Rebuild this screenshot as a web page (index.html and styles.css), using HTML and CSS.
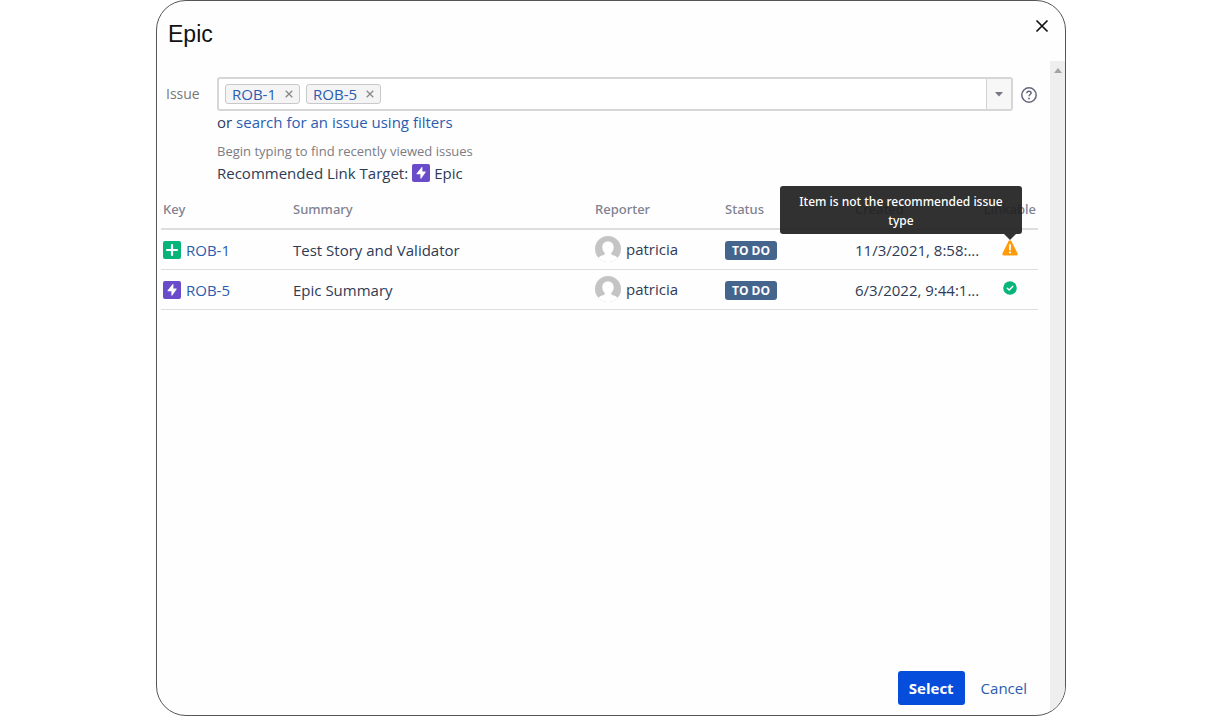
FILE: index.html
```html
<!DOCTYPE html>
<html lang="en">
<head>
    <meta charset="UTF-8">
    <meta name="viewport" content="width=device-width, initial-scale=1.0">
    <title>Epic</title>
    <link rel="stylesheet" href="styles.css">
</head>
<body>
    <!-- shared icons -->
    <svg class="sprite" width="0" height="0" aria-hidden="true">
        <symbol id="icon-epic" viewBox="0 0 18 18">
            <rect width="18" height="18" rx="2" fill="#6a4bc9"/>
            <path d="M9.6 3.2 4.6 9.4c-.3.4-.1.9.4.9h3.4v4c0 .5.5.6.8.2l4.3-6c.3-.4.1-.9-.4-.9h-2.7V3.5c0-.5-.5-.6-.8-.3z" fill="#fff"/>
        </symbol>
        <symbol id="icon-story" viewBox="0 0 18 18">
            <rect width="18" height="18" rx="2" fill="#06b479"/>
            <path d="M9 4v10M4 9h10" stroke="#fff" stroke-width="2.200" stroke-linecap="round"/>
        </symbol>
        <symbol id="icon-avatar" viewBox="0 0 26 26">
            <clipPath id="avatar-clip"><circle cx="13" cy="13" r="13"/></clipPath>
            <g clip-path="url(#avatar-clip)">
                <rect width="26" height="26" fill="#c4c4c4"/>
                <path d="M13 5.500c-3.700 0-5.700 2.500-5.700 5.800 0 2.400 1 4.400 2.500 5.700 0 1.500-.9 2-2.800 2.600C4.500 20.300 3 21.500 2 26h22c-1-4.500-2.500-5.700-5-6.400-1.900-.6-2.800-1.100-2.800-2.600 1.500-1.300 2.500-3.300 2.500-5.700 0-3.300-2-5.800-5.700-5.800z" fill="#fff"/>
            </g>
        </symbol>
    </svg>

    <div class="dialog" role="dialog" aria-labelledby="dialog-title">
        <header class="dialog-header">
            <h1 id="dialog-title">Epic</h1>
            <button type="button" class="close" aria-label="Close">
                <svg width="14" height="14" viewBox="0 0 14 14"><path d="M1.500 1.500l11 11M12.500 1.500l-11 11" stroke="#111" stroke-width="1.700" fill="none"/></svg>
            </button>
        </header>

        <div class="dialog-body">
            <form class="content">
                <div class="field">
                    <label for="issue">Issue</label>
                    <div class="control">
                        <div class="picker">
                            <div class="tags">
                                <span class="tag">ROB-1 <button type="button" aria-label="Remove ROB-1"><svg width="8" height="8" viewBox="0 0 8 8"><path d="M.7.7l6.600 6.600M7.300.7L.7 7.300" stroke="#888" stroke-width="1.300"/></svg></button></span>
                                <span class="tag">ROB-5 <button type="button" aria-label="Remove ROB-5"><svg width="8" height="8" viewBox="0 0 8 8"><path d="M.7.7l6.600 6.600M7.300.7L.7 7.300" stroke="#888" stroke-width="1.300"/></svg></button></span>
                                <input type="text" id="issue">
                            </div>
                            <button type="button" class="toggle" aria-label="Show issues">
                                <svg width="8" height="5" viewBox="0 0 8 5"><path d="M0 0h8L4 4.500z" fill="#777784"/></svg>
                            </button>
                        </div>
                        <p class="search">or <a href="#">search for an issue using filters</a></p>
                        <p class="hint">Begin typing to find recently viewed issues</p>
                        <p class="target">Recommended Link Target: <svg class="type-icon"><use href="#icon-epic"/></svg> Epic</p>
                    </div>
                    <button type="button" class="help" aria-label="Help">
                        <svg width="16" height="16" viewBox="0 0 16 16" fill="none" stroke="#66667a" stroke-width="1.500"><circle cx="8" cy="8" r="7.200"/><path d="M5.900 6.300c0-1.300.9-2.100 2.100-2.100s2.100.8 2.100 1.900c0 1.400-2.100 1.500-2.100 3.200"/><circle cx="8" cy="11.500" r=".9" fill="#66667a" stroke="none"/></svg>
                    </button>
                </div>

                <table>
                    <colgroup>
                        <col class="col-md">
                        <col>
                        <col class="col-md">
                        <col class="col-md">
                        <col class="col-md">
                        <col class="col-sm">
                    </colgroup>
                    <thead>
                        <tr>
                            <th>Key</th>
                            <th>Summary</th>
                            <th>Reporter</th>
                            <th>Status</th>
                            <th>Created</th>
                            <th class="linkable">Linkable</th>
                        </tr>
                    </thead>
                    <tbody>
                        <tr>
                            <td><div class="cell"><svg class="type-icon"><use href="#icon-story"/></svg><a href="#">ROB-1</a></div></td>
                            <td>Test Story and Validator</td>
                            <td class="reporter"><div class="cell"><svg class="avatar"><use href="#icon-avatar"/></svg>patricia</div></td>
                            <td><span class="status">TO DO</span></td>
                            <td>11/3/2021, 8:58:...</td>
                            <td class="linkable">
                                <span class="link-state">
                                    <svg width="16" height="16" viewBox="0 0 16 16"><path d="M6.500 1.200 .5 13.200C0 14.500.7 15.500 2 15.500h12c1.300 0 2-1 1.500-2.300L9.500 1.200c-.7-1.300-2.300-1.300-3 0z" fill="#ff9b0a"/><path d="M8 5v4.500" stroke="#fff" stroke-width="1.800" stroke-linecap="round"/><circle cx="8" cy="12.500" r="1.100" fill="#fff"/></svg>
                                    <span class="tooltip" role="tooltip">Item is not the recommended issue type</span>
                                </span>
                            </td>
                        </tr>
                        <tr>
                            <td><div class="cell"><svg class="type-icon"><use href="#icon-epic"/></svg><a href="#">ROB-5</a></div></td>
                            <td>Epic Summary</td>
                            <td class="reporter"><div class="cell"><svg class="avatar"><use href="#icon-avatar"/></svg>patricia</div></td>
                            <td><span class="status">TO DO</span></td>
                            <td>6/3/2022, 9:44:1...</td>
                            <td class="linkable">
                                <span class="link-state">
                                    <svg width="16" height="16" viewBox="0 0 16 16"><circle cx="8" cy="8" r="6.800" fill="#07b47a"/><path d="M5.300 8.200l1.900 1.800 3.500-3.600" fill="none" stroke="#fff" stroke-width="1.500" stroke-linecap="round" stroke-linejoin="round"/></svg>
                                </span>
                            </td>
                        </tr>
                    </tbody>
                </table>

                <div class="actions">
                    <button type="submit" class="primary">Select</button>
                    <button type="button" class="cancel">Cancel</button>
                </div>
            </form>
            <div class="scrollbar">
                <svg width="8" height="5" viewBox="0 0 8 5"><path d="M0 5h8L4 0z" fill="#a3a3a3"/></svg>
            </div>
        </div>
    </div>
</body>
</html>
```

FILE: styles.css
```css
* {
    box-sizing: border-box;
}
body {
    margin: 0;
    padding: 0 148px 9px 156px;
    min-height: 100vh;
    display: flex;
    background-color: #fff;
    color: #2f3b54;
    font-family: "Open Sans", sans-serif;
    font-size: 15px;
    line-height: 20px;
}
button {
    padding: 0;
    border: none;
    background: none;
    font: inherit;
    cursor: pointer;
}
a {
    color: #2a5db0;
    text-decoration: none;
}
a:hover {
    text-decoration: underline;
}
p {
    margin: 0;
}
svg {
    display: block;
}
.sprite {
    position: absolute;
}
.dialog {
    flex: 1;
    display: flex;
    flex-direction: column;
    border: 1px solid #55555a;
    border-radius: 30px;
    background-color: #fefefe;
    overflow: hidden;
}
.dialog-header {
    display: flex;
    justify-content: space-between;
    align-items: flex-start;
    height: 60px;
    padding: 18px 16px 0 11px;
}
h1 {
    margin: 0;
    color: #111;
    font-family: "Liberation Sans", Arial, sans-serif;
    font-size: 23px;
    font-weight: normal;
    line-height: 30px;
}
.dialog-body {
    flex: 1;
    display: flex;
}
.content {
    flex: 1;
    display: flex;
    flex-direction: column;
    padding: 16px 12px 10px 4px;
}
.field {
    display: flex;
    align-items: flex-start;
    padding-right: 1px;
}
.field label {
    width: 56px;
    padding: 7px 0 0 5px;
    color: #777;
    font-size: 14px;
}
.control {
    flex: 1;
}
.picker {
    display: flex;
    height: 34px;
    border: 2px solid #d6d6d8;
    border-radius: 3px;
    background-color: #fff;
}
.tags {
    flex: 1;
    display: flex;
    align-items: center;
    gap: 6px;
    padding: 0 6px;
}
.tag {
    display: flex;
    align-items: center;
    gap: 9px;
    height: 20px;
    padding: 0 6px;
    border: 1px solid #c9c9cb;
    border-radius: 3px;
    background-color: #f4f4f5;
    color: #2a5db0;
}
.tags input {
    flex: 1;
    min-width: 0;
    border: none;
    outline: none;
    background: none;
    font: inherit;
}
.toggle {
    display: flex;
    align-items: center;
    justify-content: center;
    width: 25px;
    border-left: 1px solid #d2d2d4;
    background-color: #f7f7f8;
}
.help {
    margin: 10px 0 0 8px;
}
.search {
    padding-top: 1px;
}
.hint {
    padding-top: 9px;
    color: #7c7c82;
    font-size: 13px;
}
.target {
    display: flex;
    align-items: center;
    gap: 4px;
    padding-top: 2px;
}
.type-icon {
    width: 18px;
    height: 18px;
}
table {
    width: 100%;
    margin-top: 8px;
    border-collapse: separate;
    border-spacing: 0;
    table-layout: fixed;
}
.col-md {
    width: 130px;
}
.col-sm {
    width: 55px;
}
th {
    height: 39px;
    padding: 0 2px 2px;
    border-bottom: 2px solid #dedede;
    color: #7f8291;
    font-family: "Noto Sans", sans-serif;
    font-size: 13px;
    font-weight: 500;
    text-align: left;
}
td {
    height: 40px;
    padding: 0 2px;
    border-bottom: 1px solid #dedede;
    white-space: nowrap;
}
th.linkable {
    padding-left: 0;
    text-align: right;
}
td.linkable {
    padding-bottom: 4px;
}
td.reporter {
    padding-bottom: 2px;
}
.cell {
    display: flex;
    align-items: center;
    gap: 5px;
}
.avatar {
    width: 26px;
    height: 26px;
}
.status {
    display: inline-block;
    padding: 0 7px;
    border-radius: 3px;
    background-color: #44658c;
    color: #fff;
    font-size: 12px;
    font-weight: bold;
    line-height: 19px;
}
.link-state {
    display: block;
    position: relative;
    width: 16px;
    margin-left: 17px;
}
.tooltip {
    position: absolute;
    right: -4px;
    bottom: 22px;
    width: 242px;
    padding: 6px 10px 4px;
    border-radius: 3px;
    background-color: rgba(32, 32, 32, 0.92);
    color: #fff;
    font-family: "Noto Sans", sans-serif;
    font-size: 12px;
    font-weight: 500;
    line-height: 19px;
    text-align: center;
    white-space: normal;
}
.tooltip::after {
    content: "";
    position: absolute;
    top: 100%;
    right: 6px;
    border: 6px solid transparent;
    border-top-color: #333;
    border-bottom: none;
}
.actions {
    display: flex;
    justify-content: flex-end;
    gap: 16px;
    margin-top: auto;
    padding-right: 11px;
}
.primary {
    height: 34px;
    padding: 0 11px;
    border-radius: 3px;
    background-color: #064ddb;
    color: #fff;
    font-weight: bold;
}
.cancel {
    color: #2a5db0;
}
.scrollbar {
    display: flex;
    justify-content: center;
    width: 15px;
    padding-top: 7px;
    background-color: #eee;
}
```
